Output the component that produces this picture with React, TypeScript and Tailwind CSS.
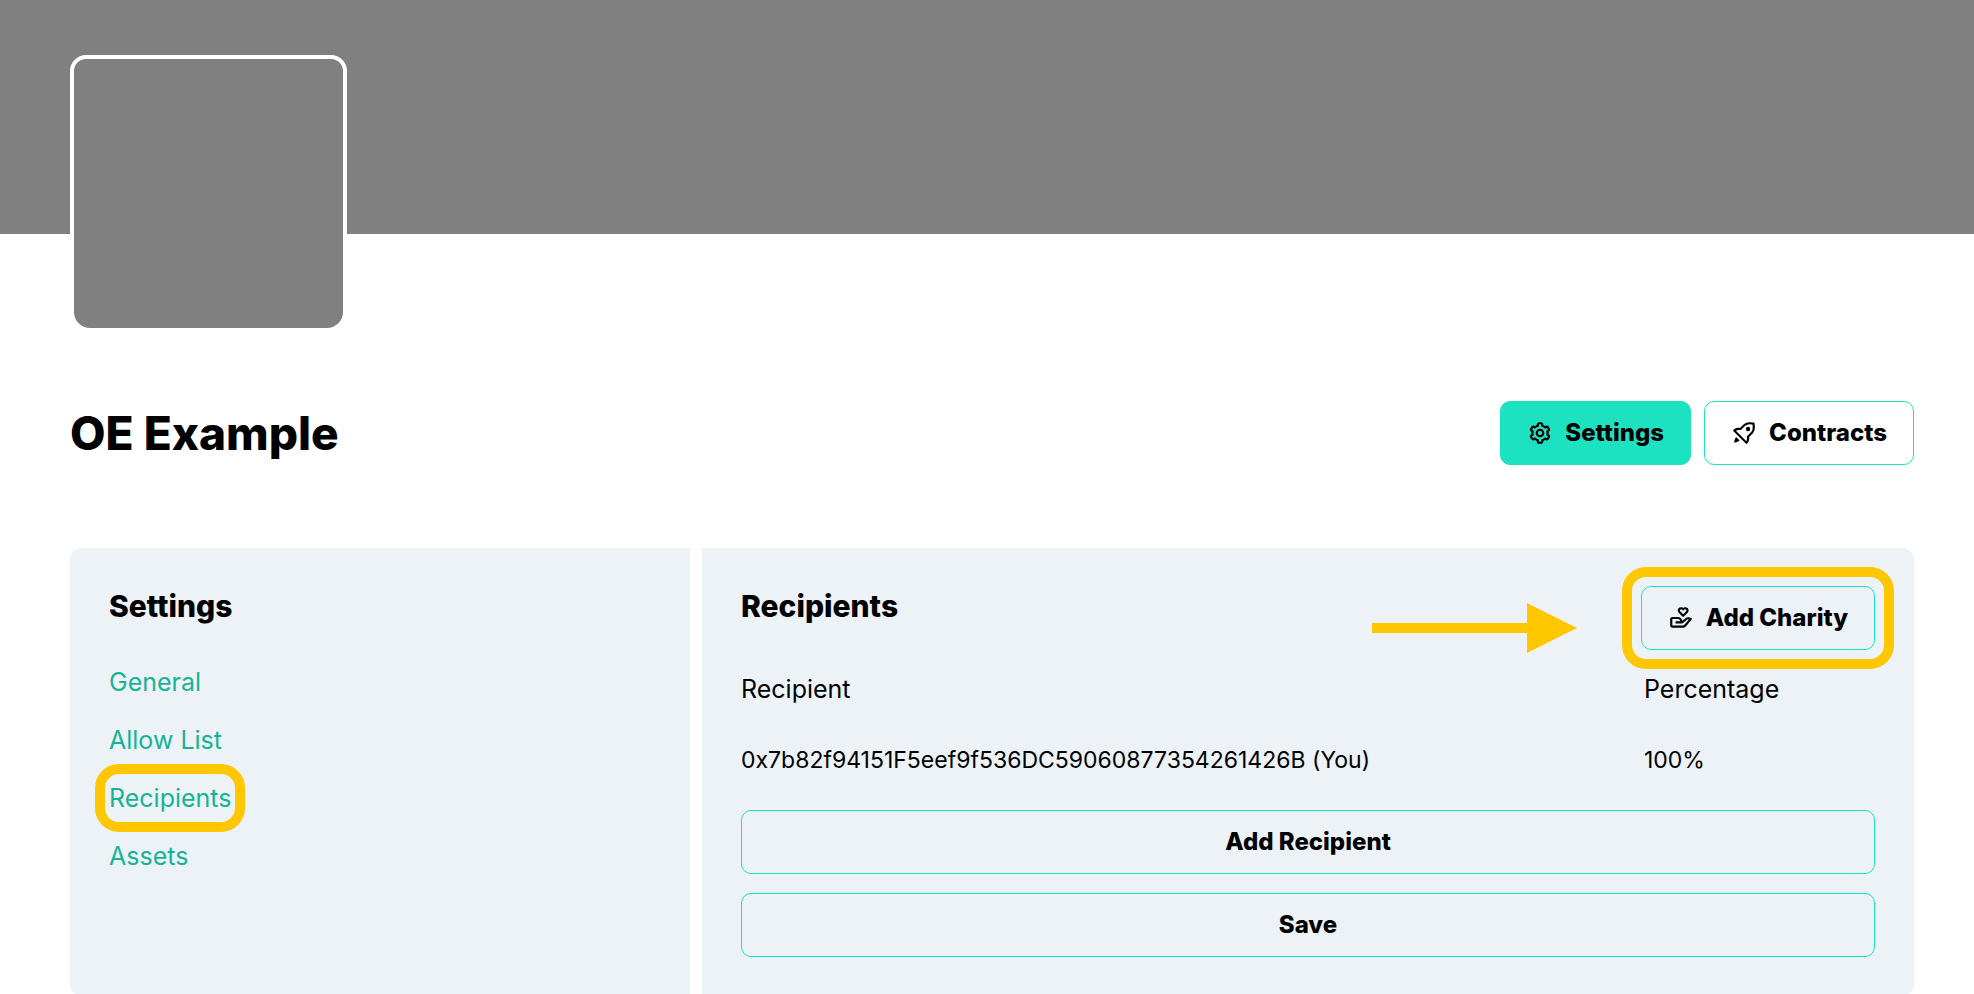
import type { ReactNode } from "react";
import { BiCog, BiDonateHeart, BiRocket } from "react-icons/bi";

const links = ["General", "Allow List", "Recipients", "Assets"];

const recipients = [
  { address: "0x7b82f94151F5eef9f536DC59060877354261426B (You)", share: "100%" },
];

function Button({
  children,
  icon,
  primary = false,
  block = false,
}: {
  children: ReactNode;
  icon?: ReactNode;
  primary?: boolean;
  block?: boolean;
}) {
  return (
    <button
      type="button"
      className={`flex h-16 items-center justify-center gap-3 rounded-[10px] border border-[#1de2c1] px-[26px] text-2xl font-extrabold whitespace-nowrap ${
        primary ? "bg-[#1de2c1]" : ""
      } ${block ? "w-full" : ""}`}
    >
      {icon}
      {children}
    </button>
  );
}

function Highlight({ className }: { className: string }) {
  return (
    <span
      aria-hidden="true"
      className={`pointer-events-none absolute rounded-3xl border-10 border-[#ffc700] ${className}`}
    />
  );
}

export default function App() {
  return (
    <div className="min-h-screen bg-white font-['Inter',sans-serif] text-[25px] text-black">
      <header className="h-[234px] bg-[#808080] pt-[55px] pl-[70px]">
        <div className="size-[277px] rounded-t-2xl rounded-b-[20px] border-4 border-white bg-[#808080]" />
      </header>

      <main className="pt-[167px] pr-[60px] pl-[70px]">
        <div className="flex items-center justify-between">
          <h1 className="text-[46px] leading-12 font-extrabold">OE Example</h1>
          <div className="flex gap-[13px]">
            <Button primary icon={<BiCog className="size-[26px]" />}>
              Settings
            </Button>
            <Button icon={<BiRocket className="size-[26px]" />}>Contracts</Button>
          </div>
        </div>

        <div className="mt-[83px] grid grid-cols-[620fr_1212fr] gap-3">
          <nav className="rounded-l-xl bg-[#ecf2f6] p-[39px] pt-[38px]" aria-label="Settings">
            <h2 className="text-[30px] leading-10 font-extrabold">Settings</h2>
            <ul className="mt-[38px] flex flex-col gap-[22px] leading-9">
              {links.map((label) => (
                <li key={label}>
                  <a href="#" className="relative inline-block text-[#18b297]">
                    {label}
                    {label === "Recipients" && <Highlight className="-inset-x-3.5 -inset-y-4" />}
                  </a>
                </li>
              ))}
            </ul>
          </nav>

          <section className="rounded-r-xl bg-[#ecf2f6] p-[39px] pt-[38px]">
            <div className="relative flex items-start justify-between">
              <h2 className="text-[30px] leading-10 font-extrabold">Recipients</h2>
              <svg
                aria-hidden="true"
                viewBox="0 0 205 50"
                className="absolute top-[17px] right-[298px] h-[50px] w-[205px] fill-[#ffc700]"
              >
                <path d="M0 20H155V0L205 25L155 50V30H0Z" />
              </svg>
              <div className="relative">
                <Button icon={<BiDonateHeart className="size-[26px]" />}>Add Charity</Button>
                <Highlight className="-inset-x-[19px] -inset-y-[19px]" />
              </div>
            </div>

            <table className="mt-1 w-full text-left">
              <thead>
                <tr className="h-[71px]">
                  <th className="p-0 font-normal">Recipient</th>
                  <th className="w-[231px] p-0 font-normal">Percentage</th>
                </tr>
              </thead>
              <tbody>
                {recipients.map((r) => (
                  <tr key={r.address} className="h-[71px] text-[23px]">
                    <td className="p-0">{r.address}</td>
                    <td className="p-0">{r.share}</td>
                  </tr>
                ))}
              </tbody>
            </table>

            <div className="mt-3.5 flex flex-col gap-[19px]">
              <Button block>Add Recipient</Button>
              <Button block>Save</Button>
            </div>
          </section>
        </div>
      </main>
    </div>
  );
}
